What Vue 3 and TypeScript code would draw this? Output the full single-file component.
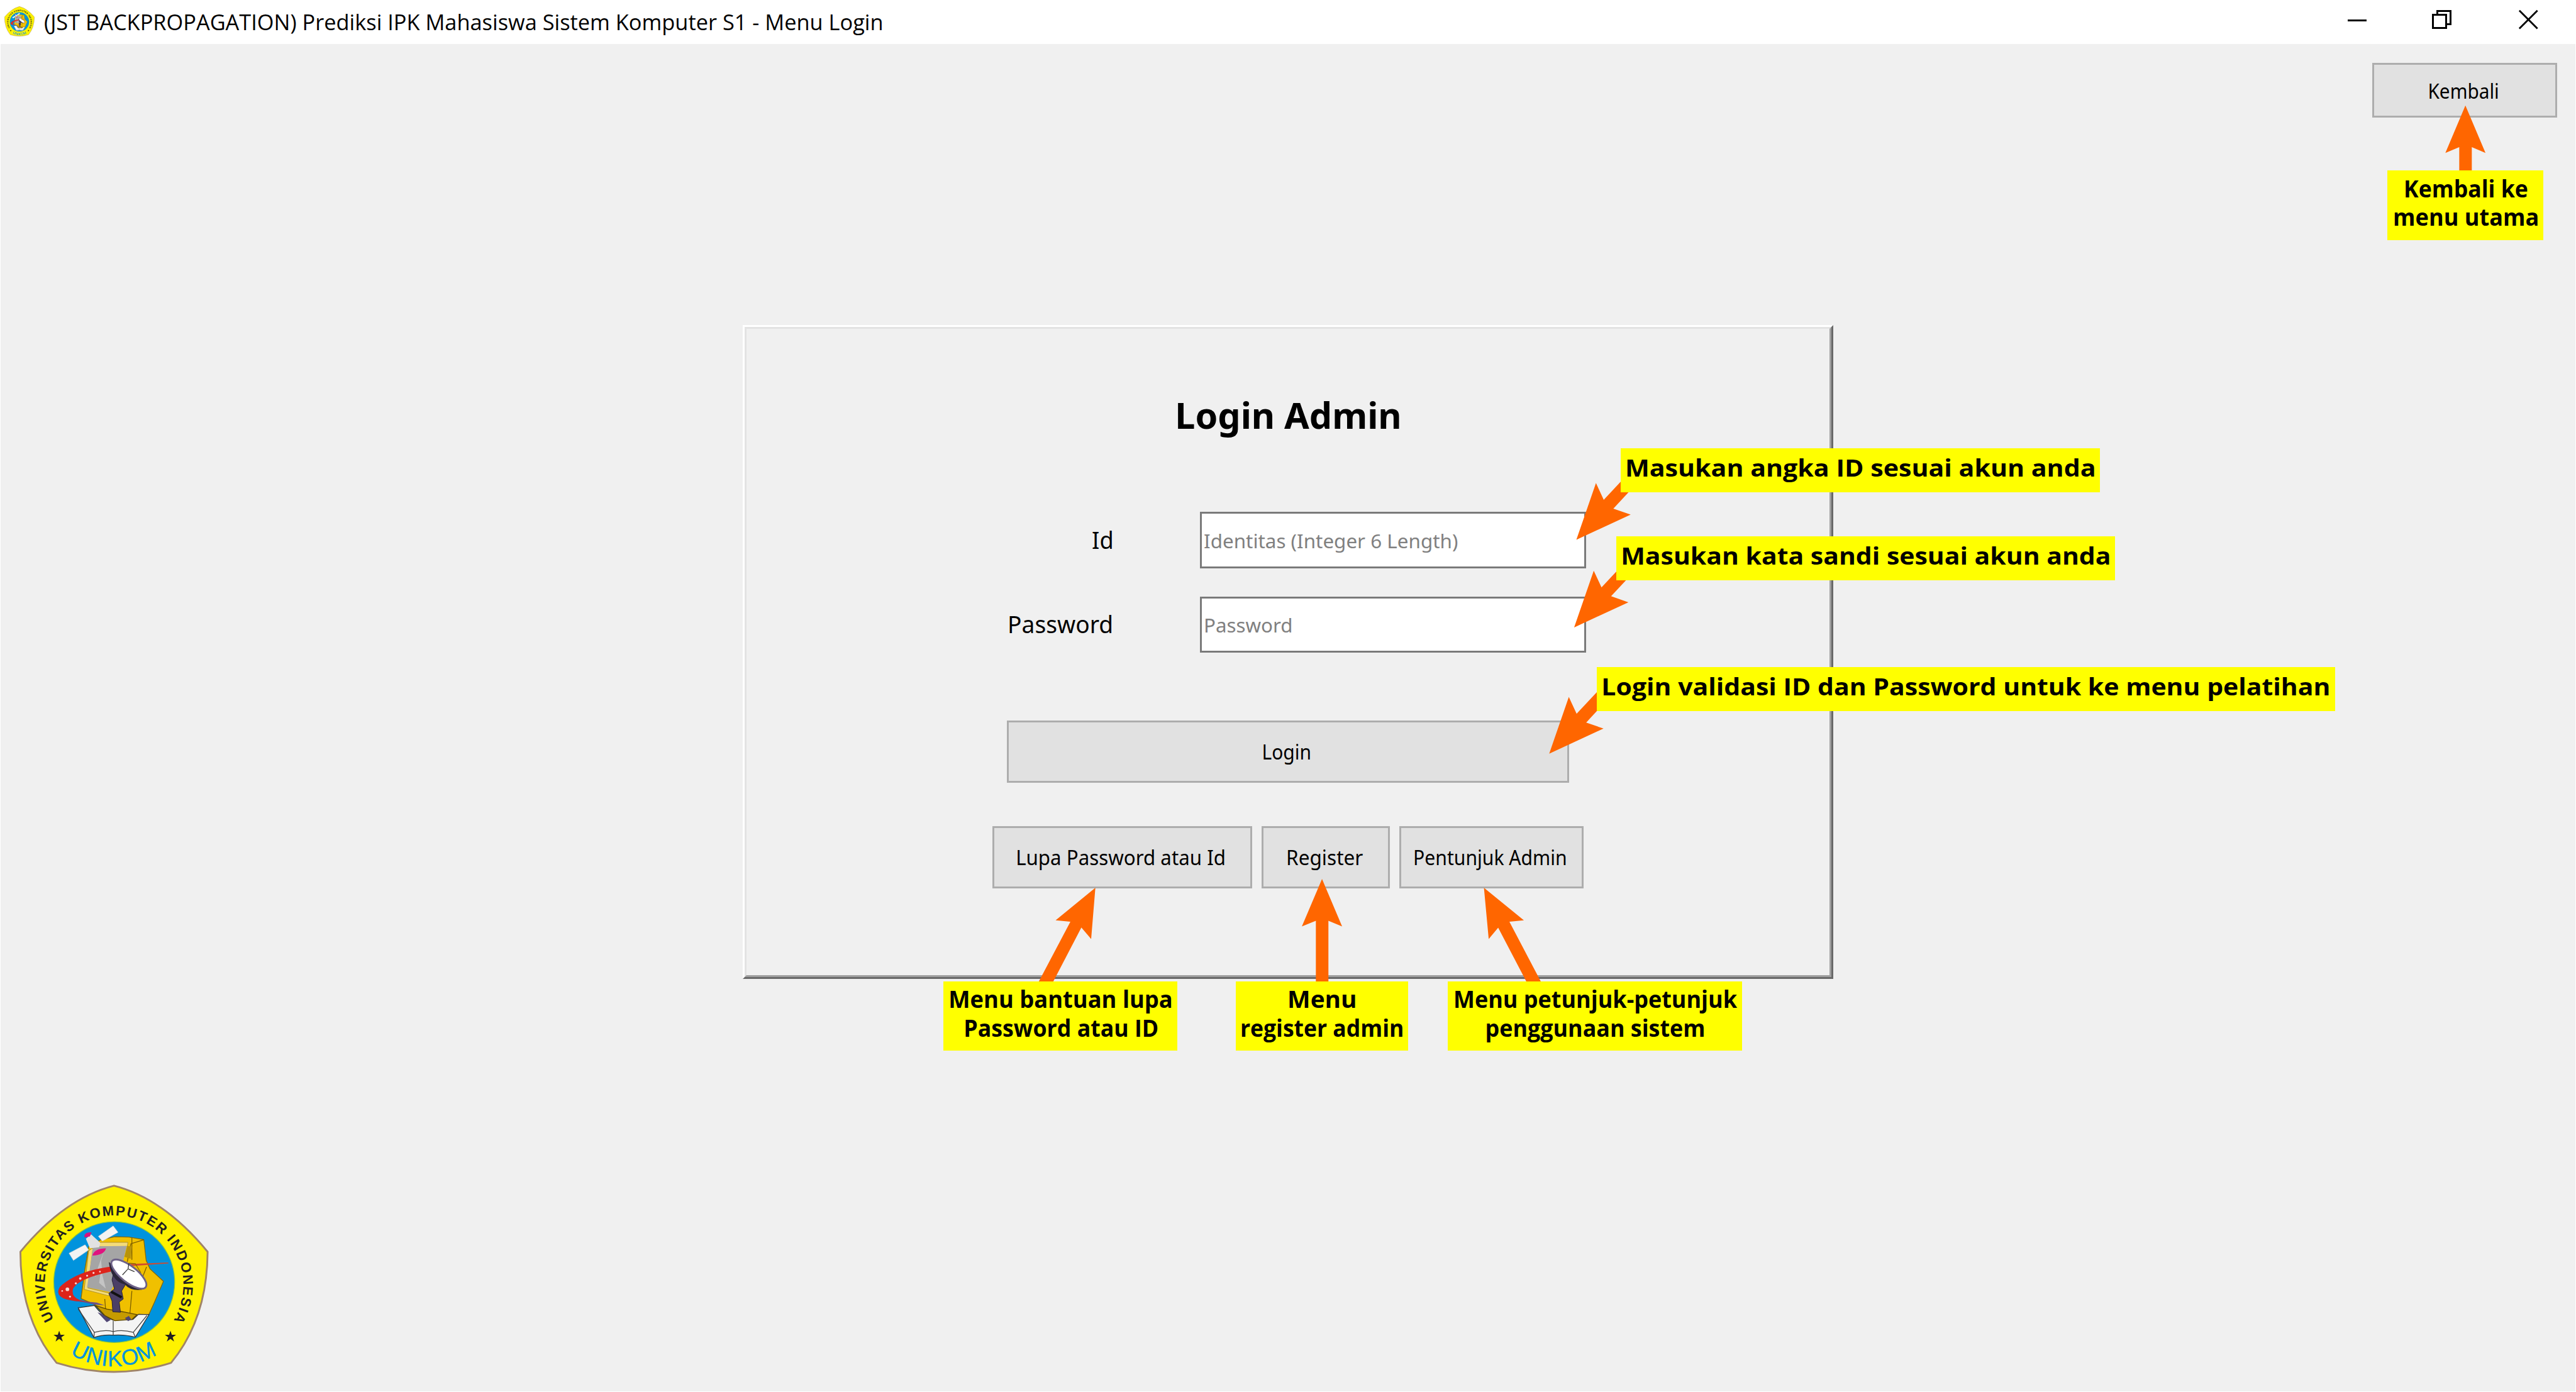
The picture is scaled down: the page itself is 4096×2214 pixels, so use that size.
<script setup lang="ts">
import { h } from 'vue'
import type { Directive, FunctionalComponent } from 'vue'

interface Line { text: string; width: number }
interface Callout { id: string; x: number; y: number; w: number; lines: Line[] }

// Horizontal design units: the whole window is 4270 units wide.
const UNITS = 4270

// Stretches a line of text so that its ink spans the given number of design units.
const vFit: Directive<HTMLElement, number> = {
  mounted(el, binding) {
    const ctx = document.createElement('canvas').getContext('2d')
    if (!ctx) return
    const cs = getComputedStyle(el)
    ctx.font = `${cs.fontWeight} ${cs.fontSize} ${cs.fontFamily}`
    const m = ctx.measureText((el.textContent ?? '').trim())
    const ink = m.actualBoundingBoxLeft + m.actualBoundingBoxRight
    const target = (binding.value * window.innerWidth) / UNITS
    el.style.transform = `scaleX(${target / ink})`
  },
}

const callouts: Callout[] = [
  { id: 'back', x: 3957.7, y: 283, w: 258.3, lines: [{ text: 'Kembali ke', width: 202 }, { text: 'menu utama', width: 237.5 }] },
  { id: 'id', x: 2686.5, y: 743.4, w: 794.8, lines: [{ text: 'Masukan angka ID sesuai akun anda', width: 774 }] },
  { id: 'pass', x: 2679, y: 888.8, w: 826.5, lines: [{ text: 'Masukan kata sandi sesuai akun anda', width: 806 }] },
  { id: 'login', x: 2646.6, y: 1106, w: 1223.8, lines: [{ text: 'Login validasi ID dan Password untuk ke menu pelatihan', width: 1202 }] },
  { id: 'forgot', x: 1564, y: 1627, w: 388, lines: [{ text: 'Menu bantuan lupa', width: 366 }, { text: 'Password atau ID', width: 318.5 }] },
  { id: 'register', x: 2048, y: 1627, w: 286, lines: [{ text: 'Menu', width: 109 }, { text: 'register admin', width: 267 }] },
  { id: 'guide', x: 2399.8, y: 1627, w: 487.5, lines: [{ text: 'Menu petunjuk-petunjuk', width: 468 }, { text: 'penggunaan sistem', width: 360 }] },
]

const place = (c: Callout) => ({ left: `${c.x / 10}rem`, top: `${c.y / 10}rem`, width: `${c.w / 10}rem` })

const inputArrow = '0,0 32.5,-94 45.4,-66.3 90,-114 110,-104 61.3,-51.7 90,-41.7'
const arrows: { points: string; dx: number; dy: number }[] = [
  { points: '4086.7,175 4120,253.7 4097.3,244 4097.3,290 4076.5,290 4076.5,244 4053.5,253.7', dx: 0, dy: 0 },
  { points: inputArrow, dx: 2613, dy: 895 },
  { points: inputArrow, dx: 2609.3, dy: 1040.3 },
  { points: inputArrow, dx: 2568, dy: 1249.7 },
  { points: '1815.7,1472 1808.7,1557 1792.5,1538 1743,1633 1719,1633 1774.3,1528.3 1749.8,1526', dx: 0, dy: 0 },
  { points: '2191.4,1457.5 2224.7,1536 2202,1526.7 2202,1635 2181.2,1635 2181.2,1526.7 2158,1536', dx: 0, dy: 0 },
  { points: '2459.8,1472 2526,1526 2502,1528.3 2557,1633 2533,1633 2483.4,1538.3 2467.7,1557', dx: 0, dy: 0 },
]

const p = (d: string, fill: string, extra: Record<string, string | number> = {}) => h('path', { d, fill, ...extra })
const star = 'M0-28 L7-8 L28-8 L11 5 L18 26 L0 13 L-18 26 L-11 5 L-28-8 L-7-8Z'

const UnikomLogo: FunctionalComponent<{ uid: string }> = (props) =>
  h('svg', { viewBox: '96 70 942 940', 'aria-label': 'UNIKOM' }, [
    h('defs', [
      h('path', { id: `${props.uid}-top`, d: 'M267 741 A345 345 0 1 1 872 728' }),
      h('path', { id: `${props.uid}-bottom`, d: 'M347 914 A419 419 0 0 0 790 910' }),
    ]),
    p('M566 76 Q814 140 1032 405 Q1030 740 850 958 Q566 1048 280 958 Q100 740 100 405 Q318 140 566 76Z', '#fff200', { stroke: '#a08468', 'stroke-width': 9, 'stroke-linejoin': 'round' }),
    h('circle', { cx: 567, cy: 556, r: 301, fill: '#0093dd', stroke: '#8cc63f', 'stroke-width': 4 }),
    // gold emblem
    p('M440 380 L500 345 L570 330 L640 332 L714 344 L726 448 L745 490 L812 552 L768 655 L740 716 L680 722 L655 742 L570 748 L520 722 L470 668 L402 638 L420 500Z', '#f0c000', { stroke: '#8a6a00', 'stroke-width': 4 }),
    p('M655 335 L655 445 M715 345 L650 365 L632 455 M728 480 L705 540 M655 600 L645 715 M520 640 L525 705', 'none', { stroke: '#7a5c00', 'stroke-width': 4 }),
    p('M632 375 L655 380 L650 440 L618 430Z', '#b8930a'),
    p('M500 358 L635 358 L632 378 L462 380 L436 585 L545 612 L540 624 L418 592 L440 400Z', '#f4dc7a', { stroke: '#8a7330', 'stroke-width': 2 }),
    p('M462 378 L630 376 L612 450 L560 450 L590 520 L548 606 L432 582Z', '#a5a5a5'),
    p('M520 392 L498 450 L470 530 L500 500 L492 560 L525 588 L508 520 L502 450Z', '#c4c4c4'),
    // satellite
    p('M488 328 L562 276 L586 308 L508 352Z M342 412 L422 370 L440 396 L364 448Z', '#f3f3f3', { stroke: '#cfcfcf', 'stroke-width': 2 }),
    p('M426 340 L452 318 L498 360 L492 382 L446 388Z', '#e2e2e2'),
    p('M418 330 Q418 306 454 308 L446 328 Q436 330 424 334Z', '#d8127d'),
    p('M458 424 Q468 388 526 388 Q518 422 458 424Z', '#e0147f'),
    // red swoosh
    p('M556 478 Q380 500 296 580 Q270 624 330 642 Q370 652 430 656 Q472 664 500 668 L470 660 L395 645 Q352 628 362 590 Q384 540 550 504Z', '#dd241b'),
    p('M640 466 L835 458 L838 463 L650 476Z', '#cf4a30'),
    p('M372 648 L480 658 L520 672 L470 668Z', '#69508a'),
    ...[[334, 592, 9], [347, 628, 5], [376, 562, 5], [398, 538, 6], [432, 524, 5], [464, 510, 5], [496, 504, 4], [308, 600, 4]].map(([cx, cy, r]) => h('circle', { cx, cy, r, fill: '#f7d9d4' })),
    // open book
    p('M388 684 L468 672 Q510 728 560 744 L660 742 L688 716 L740 718 L672 830 Q620 816 562 820 Q510 816 466 832Z', '#f4f4f4', { stroke: '#333', 'stroke-width': 4 }),
    p('M388 690 L468 806 Q520 792 562 802 Q610 792 662 806 L730 722 M562 748 L562 820 M468 806 L466 830 M662 806 L672 830', 'none', { stroke: '#444', 'stroke-width': 4 }),
    p('M474 672 L530 690 L610 704 L680 718 L655 742 L570 748 L520 722Z', '#c69b00', { stroke: '#5c4600', 'stroke-width': 4 }),
    p('M484 706 L500 712 L550 744 L530 756Z M620 735 L640 724 L652 742 L636 750Z', '#4f4574'),
    // dish antenna and its mast
    p('M566 500 L610 545 L628 560 L604 600 L612 640 L592 655 L598 706 L560 704 L556 650 L540 612 L568 590 L556 545Z', '#4b3f66', { stroke: '#262033', 'stroke-width': 3 }),
    p('M552 604 L604 632', 'none', { stroke: '#111', 'stroke-width': 12 }),
    p('M540 456 Q552 552 620 568 Q650 602 706 594 L720 580 L560 470Z', '#2b2638'),
    h('ellipse', { cx: 640, cy: 516, rx: 106, ry: 40, fill: '#ffffff', stroke: '#6e6288', 'stroke-width': 9, transform: 'rotate(38 640 516)' }),
    p('M608 520 L636 490 L668 504 M636 490 L640 462', 'none', { stroke: '#333', 'stroke-width': 4 }),
    p('M640 462 L672 464 L700 510', 'none', { stroke: '#8a6a00', 'stroke-width': 4 }),
    h('text', { class: 'ring' }, [h('textPath', { href: `#${props.uid}-top`, textLength: 1450, lengthAdjust: 'spacing' }, 'UNIVERSITAS KOMPUTER INDONESIA')]),
    h('text', { class: 'short' }, [h('textPath', { href: `#${props.uid}-bottom`, textLength: 456, lengthAdjust: 'spacing' }, 'UNIKOM')]),
    p(star, '#231f20', { transform: 'translate(293 826)' }),
    p(star, '#231f20', { transform: 'translate(847 826)' }),
  ])
UnikomLogo.props = ['uid']
</script>

<template>
  <div class="window">
    <header class="titlebar">
      <UnikomLogo class="app-icon" uid="small" />
      <h1 class="caption"><span v-fit="1388">(JST BACKPROPAGATION) Prediksi IPK Mahasiswa Sistem Komputer S1 - Menu Login</span></h1>
      <svg class="controls" viewBox="0 0 378 73" shape-rendering="crispEdges">
        <rect x="0" y="32" width="31" height="3" />
        <g fill="none" stroke="#000" stroke-width="3">
          <rect x="141.5" y="24.5" width="22" height="22" />
          <path d="M148.5 24 V18.5 H170.5 V40.5 H164" />
        </g>
        <path d="M284.500 17.500 L314.500 47.500 M314.500 17.500 L284.500 47.500" stroke="#000" stroke-width="3" shape-rendering="geometricPrecision" />
      </svg>
    </header>

    <main class="client">
      <nav class="toolbar">
        <button class="btn back"><span v-fit="113">Kembali</span></button>
      </nav>

      <section class="panel">
        <div class="panel-inner">
          <h2 class="heading"><span v-fit="368">Login Admin</span></h2>
          <div class="field">
            <label><span v-fit="32">Id</span></label>
            <div class="input"><span v-fit="420">Identitas (Integer 6 Length)</span></div>
          </div>
          <div class="field second">
            <label><span v-fit="169">Password</span></label>
            <div class="input"><span v-fit="142">Password</span></div>
          </div>
          <button class="btn login"><span v-fit="77">Login</span></button>
          <div class="actions">
            <button class="btn forgot"><span v-fit="343">Lupa Password atau Id</span></button>
            <button class="btn register"><span v-fit="124">Register</span></button>
            <button class="btn guide"><span v-fit="250">Pentunjuk Admin</span></button>
          </div>
        </div>
      </section>

      <UnikomLogo class="logo" uid="large" />
    </main>

    <svg class="arrows" viewBox="0 0 4270 2308">
      <polygon v-for="(a, i) in arrows" :key="i" :points="a.points" :transform="`translate(${a.dx} ${a.dy})`" />
    </svg>
    <div v-for="c in callouts" :key="c.id" class="callout" :class="{ single: c.lines.length === 1 }" :style="place(c)">
      <span v-for="l in c.lines" :key="l.text" v-fit="l.width">{{ l.text }}</span>
    </div>
  </div>
</template>

<style>
html { font-size: calc(100vw / 427); }
body { margin: 0; overflow: hidden; }
</style>

<style scoped>
.window {
  position: relative;
  display: flex;
  flex-direction: column;
  box-sizing: border-box;
  width: 100vw;
  height: 100vh;
  overflow: hidden;
  background: #fff;
  color: #000;
  font-family: "Noto Sans", sans-serif;
}
.titlebar {
  display: flex;
  align-items: center;
  flex: none;
  height: 7.3rem;
  padding-left: 0.7rem;
  background: #fff;
}
.app-icon { width: 5rem; height: 5rem; margin-bottom: 0.3rem; }
.caption {
  margin: 0 0 0 1.6rem;
  font: 400 3.6rem/7.3rem "Open Sans", sans-serif;
  white-space: nowrap;
}
.caption span { display: block; transform-origin: left center; }
.controls { width: 37.8rem; height: 7.3rem; margin-left: auto; }
.client {
  display: flex;
  flex-direction: column;
  flex: 1;
  box-sizing: border-box;
  margin: 0 1px 1px;
  background: #f0f0f0;
}
.toolbar { display: flex; justify-content: flex-end; padding: 3.1rem 3rem 0 0; }
.btn {
  display: flex;
  align-items: center;
  justify-content: center;
  box-sizing: border-box;
  height: 10.3rem;
  padding: 0 0.4rem 0 0;
  border: 3px solid #adadad;
  border-radius: 0;
  background: #e1e1e1;
  color: #000;
  font: 400 3.4rem/4.6rem "Noto Sans", sans-serif;
}
.btn span, .callout span, .heading span { display: block; white-space: nowrap; }
.back { width: 30.7rem; height: 9.1rem; padding-top: 0.3rem; }
.panel {
  display: flex;
  box-sizing: border-box;
  width: 180.7rem;
  height: 108.4rem;
  margin: 34.4rem auto 0;
  border: 3px solid;
  border-color: #fff #696969 #696969 #fff;
}
.panel-inner {
  display: flex;
  flex-direction: column;
  flex: 1;
  box-sizing: border-box;
  padding-top: 10.6rem;
  border: 3px solid;
  border-color: #e3e3e3 #a0a0a0 #a0a0a0 #e3e3e3;
}
.heading {
  display: flex;
  justify-content: center;
  margin: 0 0 12.5rem;
  padding-left: 0.2rem;
  font: 700 6rem/7.2rem "Noto Sans", sans-serif;
}
.field {
  display: grid;
  grid-template-columns: 60.8rem 64rem;
  column-gap: 14.3rem;
  height: 9.4rem;
}
.field.second { height: 9.3rem; margin: 4.7rem 0 11.3rem; }
.field label { align-self: center; text-align: right; font-size: 3.9rem; line-height: 5rem; }
.field label span { display: inline-block; transform-origin: right center; }
.input {
  display: flex;
  align-items: center;
  box-sizing: border-box;
  padding: 0.2rem 0 0 0.3rem;
  border: 3px solid #7a7a7a;
  background: #fff;
  color: #808080;
  font-size: 3.3rem;
  line-height: 4.4rem;
}
.input span { white-space: nowrap; transform-origin: left center; }
.login { align-self: center; width: 93.1rem; }
.actions { display: flex; justify-content: center; gap: 1.6rem; margin-top: 7.2rem; }
.forgot { width: 43.1rem; }
.register { width: 21.2rem; }
.guide { width: 30.6rem; }
.logo { width: 31.4rem; height: 31.3rem; margin: 34.1rem 0 0 3.1rem; }
.window :deep(.ring) { font: 700 69px "Liberation Sans", sans-serif; fill: #231f20; }
.window :deep(.short) { font: 400 110px "Liberation Sans", sans-serif; fill: #0093dd; stroke: #0093dd; stroke-width: 1px; }
.arrows { position: absolute; inset: 0; width: 427rem; height: 230.8rem; fill: #ff6600; }
.callout {
  position: absolute;
  display: flex;
  flex-direction: column;
  align-items: center;
  box-sizing: border-box;
  height: 11.55rem;
  padding: 0.6rem 0 0 0.1rem;
  background: #ff0;
  font: 700 3.9rem/4.7rem "Open Sans", sans-serif;
}
.callout.single { height: 7.3rem; padding-top: 0.85rem; }
</style>
